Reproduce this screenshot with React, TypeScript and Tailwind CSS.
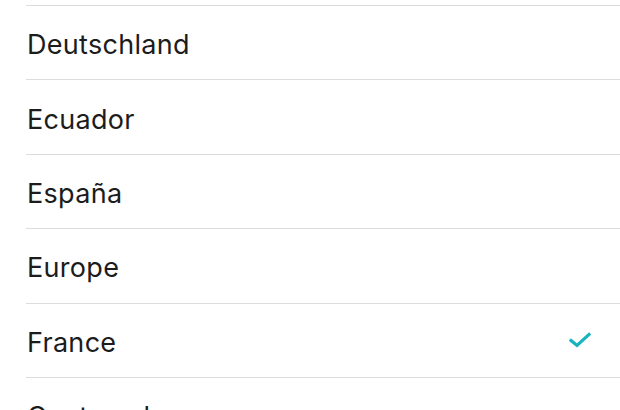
const countries = [
  "Danmark",
  "Deutschland",
  "Ecuador",
  "España",
  "Europe",
  "France",
  "Guatemala",
];

const selected = "France";

function Check() {
  return (
    <svg width="22" height="16" viewBox="0 0 22 16" fill="none">
      <path
        d="M2 8.5 L8 13.5 L20 2.5"
        stroke="#17b3bf"
        strokeWidth="3.2"
        strokeLinecap="square"
      />
    </svg>
  );
}

export default function App() {
  return (
    <div className="w-[620px] h-[410px] overflow-hidden bg-white font-['Inter',sans-serif]">
      <ul className="-mt-[69.4px] pl-[26px]">
        {countries.map((name, i) => (
          <li
            key={name}
            className={`h-[74.4px] flex items-center justify-between pr-[29px] ${
              i > 0 ? "border-t border-[#dcdcdc]" : ""
            }`}
          >
            <span className="pl-px pt-[4px] text-[27px] leading-none tracking-[0.3px] text-[#1c1c1c]">
              {name}
            </span>
            {name === selected && <Check />}
          </li>
        ))}
      </ul>
    </div>
  );
}
